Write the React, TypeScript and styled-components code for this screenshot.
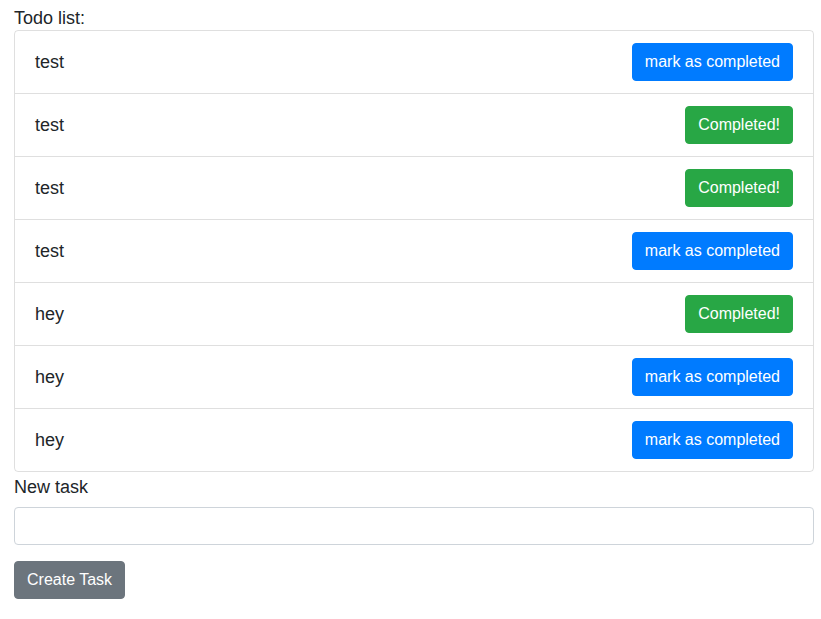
import styled, { createGlobalStyle } from "styled-components";

type Task = {
	title: string;
	completed: boolean;
};

const tasks: Task[] = [
	{ title: "test", completed: false },
	{ title: "test", completed: true },
	{ title: "test", completed: true },
	{ title: "test", completed: false },
	{ title: "hey", completed: true },
	{ title: "hey", completed: false },
	{ title: "hey", completed: false },
];

export default function App() {
	return (
		<>
			<GlobalStyle />
			<Page>
				<Heading>Todo list:</Heading>
				<List>
					{tasks.map((task, i) => (
						<Item key={i}>
							<span>{task.title}</span>
							<Button $variant={task.completed ? "success" : "primary"}>
								{task.completed ? "Completed!" : "mark as completed"}
							</Button>
						</Item>
					))}
				</List>
				<FormGroup>
					<Label htmlFor="task">New task</Label>
					<Input id="task" type="text" />
				</FormGroup>
				<Button $variant="secondary">Create Task</Button>
			</Page>
		</>
	);
}

const GlobalStyle = createGlobalStyle`
	* {
		box-sizing: border-box;
	}
	body {
		margin: 0;
		background: #fff;
		color: #212529;
		font-family: "Liberation Sans", Arial, sans-serif;
		font-size: 18px;
		line-height: 24px;
	}
`;

const colors = {
	primary: "#007bff",
	success: "#28a745",
	secondary: "#6c757d",
};

const Page = styled.div`
	width: 800px;
	margin: 0 0 0 14px;
	padding-top: 6px;
`;

const Heading = styled.div`
	height: 24px;
`;

const List = styled.ul`
	list-style: none;
	margin: 0;
	padding: 0;
	border: 1px solid rgba(0, 0, 0, 0.125);
	border-radius: 4px;
`;

const Item = styled.li`
	display: flex;
	align-items: center;
	justify-content: space-between;
	height: 63px;
	padding: 12px 20px;
	border-top: 1px solid rgba(0, 0, 0, 0.125);

	&:first-child {
		border-top: none;
		height: 62px;
	}
`;

const Button = styled.button<{ $variant: keyof typeof colors }>`
	height: 38px;
	padding: 6px 12px;
	font-family: inherit;
	font-size: 16px;
	line-height: 24px;
	color: #fff;
	background-color: ${(p) => colors[p.$variant]};
	border: 1px solid ${(p) => colors[p.$variant]};
	border-radius: 4px;
	cursor: pointer;
`;

const FormGroup = styled.div`
	margin: 3px 0 16px;
`;

const Label = styled.label`
	display: block;
	margin-bottom: 8px;
`;

const Input = styled.input`
	display: block;
	width: 100%;
	height: 38px;
	padding: 6px 12px;
	font-family: inherit;
	font-size: 16px;
	color: #495057;
	border: 1px solid #ced4da;
	border-radius: 4px;
	outline: none;
`;
